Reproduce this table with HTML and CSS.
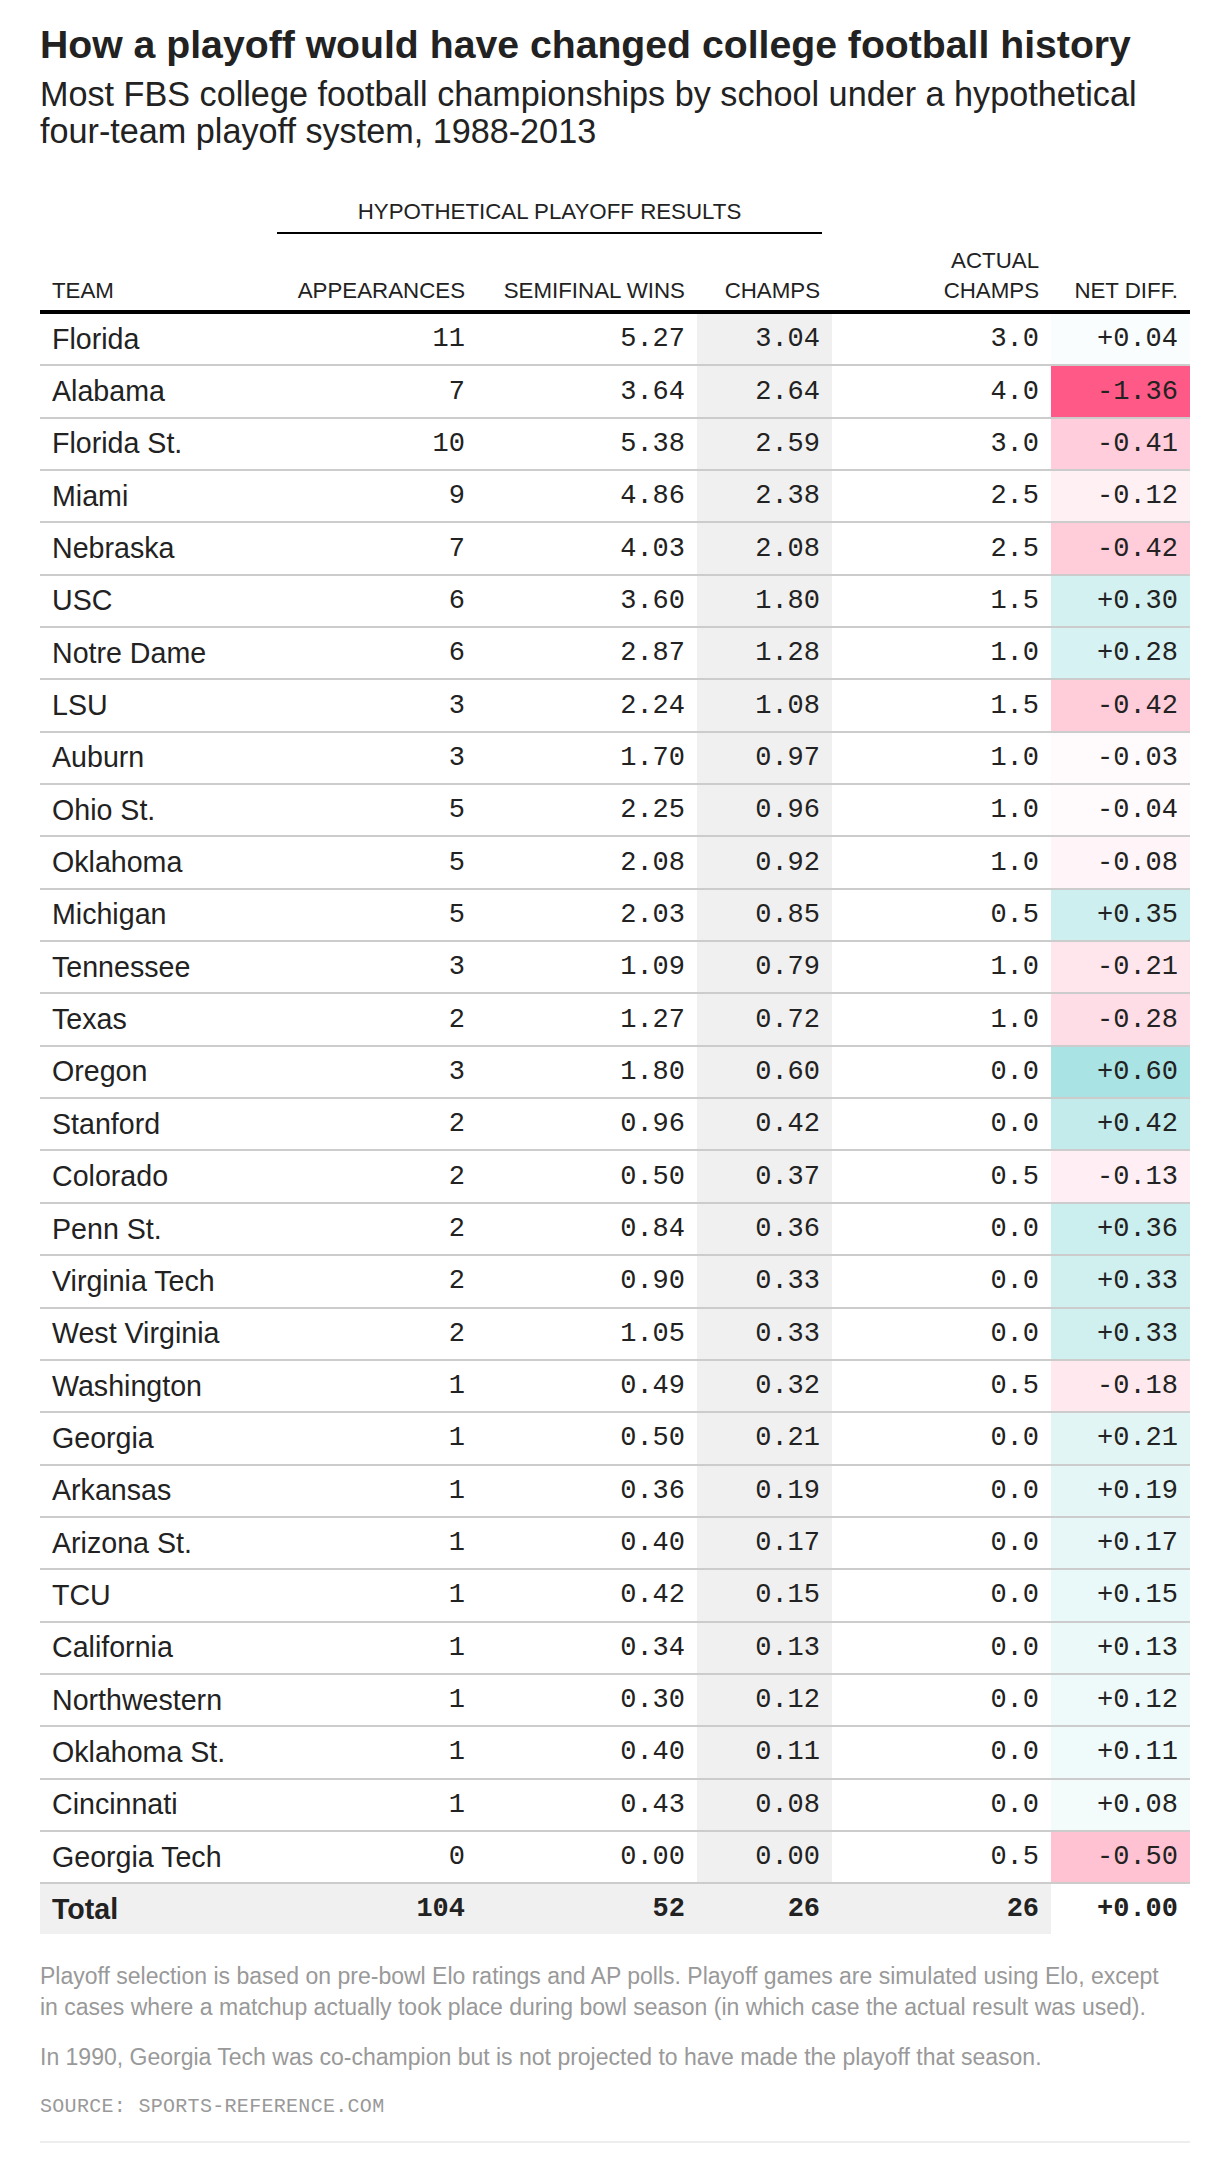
FILE: index.html
```html
<!DOCTYPE html>
<html lang="en">
<head>
<meta charset="utf-8">
<title>How a playoff would have changed college football history</title>
<link rel="stylesheet" href="styles.css">
</head>
<body>
<main class="page">
  <h1 class="title">How a playoff would have changed college football history</h1>
  <p class="subtitle">Most FBS college football championships by school under a hypothetical four-team playoff system, 1988-2013</p>

  <table class="data">
    <colgroup>
      <col class="c-team"><col class="c-app"><col class="c-semi"><col class="c-champs"><col class="c-actual"><col class="c-net">
    </colgroup>
    <thead>
      <tr class="group-row">
        <th></th>
        <th colspan="3" class="group"><div class="group-label">HYPOTHETICAL PLAYOFF RESULTS</div></th>
        <th></th>
        <th></th>
      </tr>
      <tr class="head-row">
        <th class="left">TEAM</th>
        <th>APPEARANCES</th>
        <th>SEMIFINAL WINS</th>
        <th>CHAMPS</th>
        <th>ACTUAL<br>CHAMPS</th>
        <th>NET DIFF.</th>
      </tr>
    </thead>
    <tbody>
      <tr><td class="team">Florida</td><td class="num">11</td><td class="num">5.27</td><td class="num champs">3.04</td><td class="num">3.0</td><td class="num net" style="background:rgb(249,253,253)">+0.04</td></tr>
      <tr><td class="team">Alabama</td><td class="num">7</td><td class="num">3.64</td><td class="num champs">2.64</td><td class="num">4.0</td><td class="num net" style="background:rgb(255,90,135)">-1.36</td></tr>
      <tr><td class="team">Florida St.</td><td class="num">10</td><td class="num">5.38</td><td class="num champs">2.59</td><td class="num">3.0</td><td class="num net" style="background:rgb(255,205,219)">-0.41</td></tr>
      <tr><td class="team">Miami</td><td class="num">9</td><td class="num">4.86</td><td class="num champs">2.38</td><td class="num">2.5</td><td class="num net" style="background:rgb(255,240,244)">-0.12</td></tr>
      <tr><td class="team">Nebraska</td><td class="num">7</td><td class="num">4.03</td><td class="num champs">2.08</td><td class="num">2.5</td><td class="num net" style="background:rgb(255,204,218)">-0.42</td></tr>
      <tr><td class="team">USC</td><td class="num">6</td><td class="num">3.60</td><td class="num champs">1.80</td><td class="num">1.5</td><td class="num net" style="background:rgb(212,241,241)">+0.30</td></tr>
      <tr><td class="team">Notre Dame</td><td class="num">6</td><td class="num">2.87</td><td class="num champs">1.28</td><td class="num">1.0</td><td class="num net" style="background:rgb(215,242,242)">+0.28</td></tr>
      <tr><td class="team">LSU</td><td class="num">3</td><td class="num">2.24</td><td class="num champs">1.08</td><td class="num">1.5</td><td class="num net" style="background:rgb(255,204,218)">-0.42</td></tr>
      <tr><td class="team">Auburn</td><td class="num">3</td><td class="num">1.70</td><td class="num champs">0.97</td><td class="num">1.0</td><td class="num net" style="background:rgb(255,251,252)">-0.03</td></tr>
      <tr><td class="team">Ohio St.</td><td class="num">5</td><td class="num">2.25</td><td class="num champs">0.96</td><td class="num">1.0</td><td class="num net" style="background:rgb(255,250,251)">-0.04</td></tr>
      <tr><td class="team">Oklahoma</td><td class="num">5</td><td class="num">2.08</td><td class="num champs">0.92</td><td class="num">1.0</td><td class="num net" style="background:rgb(255,245,248)">-0.08</td></tr>
      <tr><td class="team">Michigan</td><td class="num">5</td><td class="num">2.03</td><td class="num champs">0.85</td><td class="num">0.5</td><td class="num net" style="background:rgb(205,239,239)">+0.35</td></tr>
      <tr><td class="team">Tennessee</td><td class="num">3</td><td class="num">1.09</td><td class="num champs">0.79</td><td class="num">1.0</td><td class="num net" style="background:rgb(255,230,236)">-0.21</td></tr>
      <tr><td class="team">Texas</td><td class="num">2</td><td class="num">1.27</td><td class="num champs">0.72</td><td class="num">1.0</td><td class="num net" style="background:rgb(255,221,230)">-0.28</td></tr>
      <tr><td class="team">Oregon</td><td class="num">3</td><td class="num">1.80</td><td class="num champs">0.60</td><td class="num">0.0</td><td class="num net" style="background:rgb(169,227,227)">+0.60</td></tr>
      <tr><td class="team">Stanford</td><td class="num">2</td><td class="num">0.96</td><td class="num champs">0.42</td><td class="num">0.0</td><td class="num net" style="background:rgb(195,235,235)">+0.42</td></tr>
      <tr><td class="team">Colorado</td><td class="num">2</td><td class="num">0.50</td><td class="num champs">0.37</td><td class="num">0.5</td><td class="num net" style="background:rgb(255,239,244)">-0.13</td></tr>
      <tr><td class="team">Penn St.</td><td class="num">2</td><td class="num">0.84</td><td class="num champs">0.36</td><td class="num">0.0</td><td class="num net" style="background:rgb(203,238,238)">+0.36</td></tr>
      <tr><td class="team">Virginia Tech</td><td class="num">2</td><td class="num">0.90</td><td class="num champs">0.33</td><td class="num">0.0</td><td class="num net" style="background:rgb(208,240,240)">+0.33</td></tr>
      <tr><td class="team">West Virginia</td><td class="num">2</td><td class="num">1.05</td><td class="num champs">0.33</td><td class="num">0.0</td><td class="num net" style="background:rgb(208,240,240)">+0.33</td></tr>
      <tr><td class="team">Washington</td><td class="num">1</td><td class="num">0.49</td><td class="num champs">0.32</td><td class="num">0.5</td><td class="num net" style="background:rgb(255,233,239)">-0.18</td></tr>
      <tr><td class="team">Georgia</td><td class="num">1</td><td class="num">0.50</td><td class="num champs">0.21</td><td class="num">0.0</td><td class="num net" style="background:rgb(225,245,245)">+0.21</td></tr>
      <tr><td class="team">Arkansas</td><td class="num">1</td><td class="num">0.36</td><td class="num champs">0.19</td><td class="num">0.0</td><td class="num net" style="background:rgb(228,246,246)">+0.19</td></tr>
      <tr><td class="team">Arizona St.</td><td class="num">1</td><td class="num">0.40</td><td class="num champs">0.17</td><td class="num">0.0</td><td class="num net" style="background:rgb(231,247,247)">+0.17</td></tr>
      <tr><td class="team">TCU</td><td class="num">1</td><td class="num">0.42</td><td class="num champs">0.15</td><td class="num">0.0</td><td class="num net" style="background:rgb(233,248,248)">+0.15</td></tr>
      <tr><td class="team">California</td><td class="num">1</td><td class="num">0.34</td><td class="num champs">0.13</td><td class="num">0.0</td><td class="num net" style="background:rgb(236,249,249)">+0.13</td></tr>
      <tr><td class="team">Northwestern</td><td class="num">1</td><td class="num">0.30</td><td class="num champs">0.12</td><td class="num">0.0</td><td class="num net" style="background:rgb(238,249,249)">+0.12</td></tr>
      <tr><td class="team">Oklahoma St.</td><td class="num">1</td><td class="num">0.40</td><td class="num champs">0.11</td><td class="num">0.0</td><td class="num net" style="background:rgb(239,250,250)">+0.11</td></tr>
      <tr><td class="team">Cincinnati</td><td class="num">1</td><td class="num">0.43</td><td class="num champs">0.08</td><td class="num">0.0</td><td class="num net" style="background:rgb(243,251,251)">+0.08</td></tr>
      <tr><td class="team">Georgia Tech</td><td class="num">0</td><td class="num">0.00</td><td class="num champs">0.00</td><td class="num">0.5</td><td class="num net" style="background:rgb(255,194,211)">-0.50</td></tr>
    </tbody>
    <tfoot>
      <tr class="total-row">
        <td class="team">Total</td><td class="num">104</td><td class="num">52</td><td class="num">26</td><td class="num">26</td><td class="num net-total">+0.00</td>
      </tr>
    </tfoot>
  </table>

  <p class="note">Playoff selection is based on pre-bowl Elo ratings and AP polls. Playoff games are simulated using Elo, except<br>in cases where a matchup actually took place during bowl season (in which case the actual result was used).</p>
  <p class="note note-2">In 1990, Georgia Tech was co-champion but is not projected to have made the playoff that season.</p>
  <p class="source">SOURCE: SPORTS-REFERENCE.COM</p>
  <div class="rule"></div>
</main>
</body>
</html>
```

FILE: styles.css
```css
html, body {
  margin: 0;
  padding: 0;
  background: #ffffff;
}

body {
  font-family: "Liberation Sans", Arial, sans-serif;
  color: #222222;
}

.page {
  width: 1150px;
  margin: 0 0 0 40px;
  padding-bottom: 10px;
}

.title {
  margin: 22px 0 0 0;
  font-size: 39.2px;
  line-height: 46px;
  font-weight: 700;
  color: #222222;
}

.subtitle {
  margin: 7.7px 0 0 0;
  font-size: 34.2px;
  line-height: 37px;
  font-weight: 400;
  color: #222222;
}

.data {
  margin-top: 49.3px;
  width: 1150px;
  table-layout: fixed;
  border-collapse: separate;
  border-spacing: 0;
}

.c-team { width: 227px; }
.c-app { width: 210px; }
.c-semi { width: 220px; }
.c-champs { width: 135px; }
.c-actual { width: 219px; }
.c-net { width: 139px; }

.data th {
  font-weight: 400;
  font-size: 22.3px;
  text-align: right;
  color: #222222;
  padding: 0 12px;
}

.group-row th {
  padding: 0;
  vertical-align: bottom;
}

.group-row .group {
  padding: 0 10px;
}

.group-label {
  text-align: center;
  line-height: 26px;
  padding-bottom: 7px;
  border-bottom: 2px solid #000000;
}

.head-row th {
  line-height: 30px;
  padding: 12px 12px 4px 12px;
  vertical-align: bottom;
  border-bottom: 4px solid #000000;
}

.head-row th.left {
  text-align: left;
}

.data tbody tr {
  height: 52.35px;
}

.data td {
  padding: 0 12px;
  vertical-align: middle;
  color: #222222;
}

.data tbody td {
  border-bottom: 2px solid #cccccc;
}

.team {
  font-size: 28.6px;
  text-align: left;
}

.num {
  font-family: "Liberation Mono", "DejaVu Sans Mono", monospace;
  font-size: 27px;
  text-align: right;
}

.champs {
  background: #f0f0f0;
}

.total-row {
  height: 50px;
}

.total-row td {
  background: #f0f0f0;
  font-weight: 700;
}

.total-row td.net-total {
  background: #ffffff;
}

.note {
  margin: 26.5px 0 0 0;
  font-size: 23px;
  line-height: 31px;
  color: #999999;
}

.note-2 {
  margin-top: 19px;
}

.source {
  margin: 22px 0 0 0;
  font-family: "Liberation Mono", "DejaVu Sans Mono", monospace;
  font-size: 20px;
  line-height: 24px;
  letter-spacing: 0.3px;
  color: #999999;
}

.rule {
  margin-top: 22px;
  border-top: 2px solid #eeeeee;
}
```
